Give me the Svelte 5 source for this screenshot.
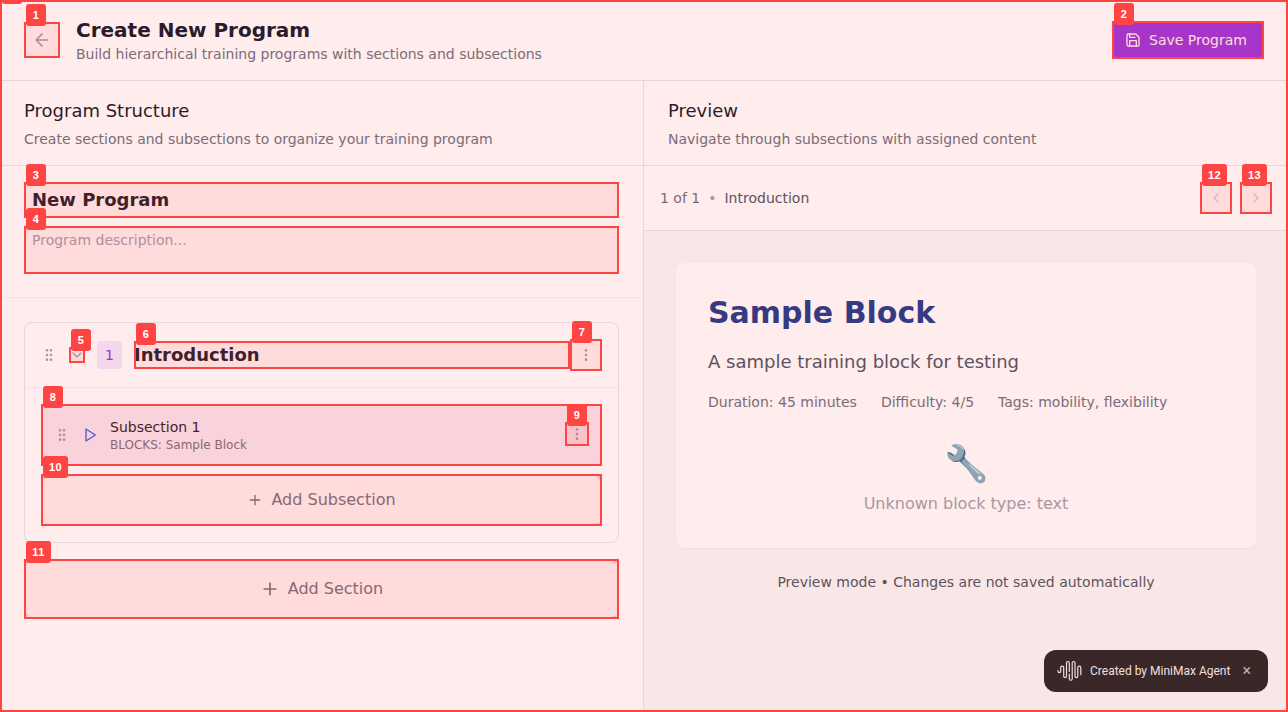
<script>
  let programName = $state('New Program');
  let description = $state('');
  let sectionName = $state('Introduction');
  const dots = [5, 12, 19];
</script>

{#snippet mark(n)}
  <span class="mark"><b class:wide={n > 9}>{n}</b></span>
{/snippet}

{#snippet grip()}
  <svg class="icon gray" viewBox="0 0 24 24">
    {#each dots as y}
      <circle cx="9" cy={y} r="1" /><circle cx="15" cy={y} r="1" />
    {/each}
  </svg>
{/snippet}

{#snippet more()}
  <svg class="icon gray" viewBox="0 0 24 24">
    {#each dots as y}<circle cx="12" cy={y} r="1" />{/each}
  </svg>
{/snippet}

<div class="app">
  <header>
    <button class="back host" aria-label="Back">
      <svg class="icon i20 gray" viewBox="0 0 24 24"><path d="m12 19-7-7 7-7M19 12H5" /></svg>
      {@render mark(1)}
    </button>
    <div class="heading">
      <h1>Create New Program</h1>
      <p>Build hierarchical training programs with sections and subsections</p>
    </div>
    <button class="save host">
      <svg class="icon" viewBox="0 0 24 24">
        <path d="M19 21H5a2 2 0 0 1-2-2V5a2 2 0 0 1 2-2h11l5 5v11a2 2 0 0 1-2 2z" />
        <path d="M17 21v-8H7v8M7 3v5h8" />
      </svg>
      <span>Save Program</span>
      {@render mark(2)}
    </button>
  </header>

  <main>
    <section class="structure">
      <div class="panel-head">
        <h2>Program Structure</h2>
        <p>Create sections and subsections to organize your training program</p>
      </div>
      <div class="details">
        <div class="host name"><input aria-label="Name" bind:value={programName} />{@render mark(3)}</div>
        <div class="host desc">
          <textarea placeholder="Program description..." bind:value={description}></textarea>
          {@render mark(4)}
        </div>
      </div>
      <div class="sections">
        <article>
          <div class="section-head">
            {@render grip()}
            <button class="toggle host" aria-label="Toggle">
              <svg class="icon gray" viewBox="0 0 24 24"><path d="m6 9 6 6 6-6" /></svg>
              {@render mark(5)}
            </button>
            <span class="number">1</span>
            <div class="host title"><input aria-label="Section" bind:value={sectionName} />{@render mark(6)}</div>
            <button class="menu host" aria-label="Section menu">{@render more()}{@render mark(7)}</button>
          </div>
          <div class="section-body">
            <div class="sub host">
              {@render grip()}
              <svg class="icon play" viewBox="0 0 24 24"><path d="m6 3 14 9-14 9z" /></svg>
              <div class="sub-text">
                <strong>Subsection 1</strong>
                <small>BLOCKS: Sample Block</small>
              </div>
              {@render mark(8)}
              <button class="menu small host" aria-label="Subsection menu">{@render more()}{@render mark(9)}</button>
            </div>
            <button class="add host">
              <svg class="icon" viewBox="0 0 24 24"><path d="M5 12h14M12 5v14" /></svg>
              Add Subsection
              {@render mark(10)}
            </button>
          </div>
        </article>
        <button class="add large host">
          <svg class="icon i20" viewBox="0 0 24 24"><path d="M5 12h14M12 5v14" /></svg>
          Add Section
          {@render mark(11)}
        </button>
      </div>
    </section>

    <section class="preview">
      <div class="panel-head">
        <h2>Preview</h2>
        <p>Navigate through subsections with assigned content</p>
      </div>
      <div class="pager">
        <span>1 of 1</span><span class="bullet">•</span><span class="current">Introduction</span>
        <div class="arrows">
          <button class="menu host" aria-label="Previous">
            <svg class="icon gray faded" viewBox="0 0 24 24"><path d="m15 18-6-6 6-6" /></svg>
            {@render mark(12)}
          </button>
          <button class="menu host" aria-label="Next">
            <svg class="icon gray faded" viewBox="0 0 24 24"><path d="m9 18 6-6-6-6" /></svg>
            {@render mark(13)}
          </button>
        </div>
      </div>
      <div class="canvas">
        <div class="card">
          <h3>Sample Block</h3>
          <p class="lead">A sample training block for testing</p>
          <div class="meta">
            <span>Duration: 45 minutes</span><span>Difficulty: 4/5</span><span>Tags: mobility, flexibility</span>
          </div>
          <div class="unknown">
            <div class="emoji">🔧</div>
            <div>Unknown block type: text</div>
          </div>
        </div>
        <p class="note">Preview mode • Changes are not saved automatically</p>
      </div>
    </section>
  </main>

  <div class="credit">
    <svg viewBox="0 0 26 22">
      <path d="M1 10.5v.7a1.3 1.3 0 0 0 2.7 0V7.6a1.5 1.5 0 0 1 3 0v8.6a1.4 1.4 0 0 0 2.8 0V2.9a1.4 1.4 0 0 1 2.8 0v8.6M12.3 14v4.8a1.4 1.4 0 0 0 2.9 0V2.9a1.4 1.4 0 0 1 2.8 0v13.3a1.4 1.4 0 0 0 2.8 0V7.6a1.5 1.5 0 0 1 3 0v7.2" />
    </svg>
    <span>Created by MiniMax Agent</span>
    <i>×</i>
  </div>

  <div class="frame"><b></b></div>
</div>

<style>
  :global(body) { margin: 0; overflow: hidden; }
  .app {
    position: relative; width: 1288px; height: 712px; overflow: hidden;
    display: flex; flex-direction: column; background: #fff; color: #111827;
    font: 14px/20px "DejaVu Sans", sans-serif;
  }
  .app :global(*) { box-sizing: border-box; }
  h1, h2, h3, p { margin: 0; }
  button, input, textarea { font: inherit; color: inherit; border: 0; background: none; padding: 0; margin: 0; outline: 0; }
  .host { position: relative; }
  .icon { width: 16px; height: 16px; flex: none; display: block; fill: none; stroke: currentColor; stroke-width: 2; stroke-linecap: round; stroke-linejoin: round; }
  .i20 { width: 20px; height: 20px; }
  .gray { color: #9ca3af; }
  .faded { opacity: .5; }

  header { display: flex; align-items: center; height: 81px; padding: 0 24px; border-bottom: 1px solid #e5e7eb; flex: none; }
  .back { width: 36px; height: 36px; display: grid; place-items: center; }
  .heading { margin-left: 16px; flex: 1; }
  h1 { font-size: 20px; line-height: 28px; font-weight: 700; }
  p { color: #6b7280; }
  .save { width: 152px; height: 38px; padding-left: 13px; display: flex; align-items: center; gap: 8px; background: #9333ea; color: #fff; border-radius: 4px; }

  main { display: flex; flex: 1; min-height: 0; }
  .structure { width: 644px; border-right: 1px solid #e5e7eb; }
  .preview { flex: 1; display: flex; flex-direction: column; }
  .panel-head { height: 85px; padding: 16px 24px; border-bottom: 1px solid #e5e7eb; }
  h2 { font-size: 18px; line-height: 28px; font-weight: 400; margin-bottom: 4px; }
  .details { height: 132px; padding: 16px 24px; border-bottom: 1px solid #f3f4f6; }
  .name { height: 36px; margin-bottom: 8px; }
  .name input { display: block; width: 100%; height: 36px; padding: 0 8px 2px; font-size: 18px; font-weight: 700; }
  .desc { height: 48px; }
  textarea { display: block; width: 100%; height: 48px; padding: 4px 8px; resize: none; overflow: hidden; }
  textarea::placeholder { color: #9ca3af; opacity: 1; }

  .sections { padding: 24px; display: flex; flex-direction: column; gap: 16px; }
  article { border: 1px solid #e5e7eb; border-radius: 8px; }
  .section-head { display: flex; align-items: center; gap: 12px; height: 65px; padding: 0 16px; border-bottom: 1px solid #f3f4f6; }
  .number { width: 25px; height: 28px; display: grid; place-items: center; border-radius: 4px; background: #f3e8ff; color: #9333ea; }
  .title { flex: 1; height: 28px; margin-right: -12px; }
  .title input { display: block; width: 100%; height: 28px; padding-bottom: 2px; font-size: 18px; font-weight: 700; }
  .menu { width: 32px; height: 32px; display: grid; place-items: center; flex: none; }
  .small { width: 24px; height: 24px; }
  .section-body { padding: 16px; display: flex; flex-direction: column; gap: 8px; }
  .sub { display: flex; align-items: center; gap: 12px; height: 62px; padding: 0 12px; border: 1px solid #e9d5ff; border-radius: 6px; background: #faf5ff; }
  .sub > .mark { inset: -1px; }
  .play { color: #2563eb; }
  .sub-text { flex: 1; display: flex; flex-direction: column; }
  .sub-text strong { font-weight: 400; }
  .sub-text small { font-size: 12px; line-height: 16px; color: #6b7280; }
  .sub .small { top: -1px; }
  .add { display: flex; align-items: center; justify-content: center; gap: 8px; height: 52px; width: 100%; border: 2px dashed #d1d5db; border-radius: 8px; color: #6b7280; font-size: 16px; line-height: 24px; }
  .add > .mark { inset: -2px; }
  .large { height: 60px; }

  .pager { display: flex; align-items: center; gap: 8px; height: 65px; padding: 0 16px; border-bottom: 1px solid #e5e7eb; color: #6b7280; }
  .bullet { color: #9ca3af; }
  .current { color: #4b5563; }
  .arrows { margin-left: auto; display: flex; gap: 8px; }
  .canvas { flex: 1; padding: 32px; background: #f9fafb; }
  .card { height: 285px; padding: 32px; border-radius: 8px; background: #fff; box-shadow: 0 1px 2px #0000000d; }
  h3 { font-size: 30px; line-height: 36px; color: #1e3a8a; margin-bottom: 17px; }
  .lead { font-size: 18px; line-height: 28px; color: #4b5563; margin-bottom: 16px; }
  .meta { display: flex; gap: 24px; color: #6b7280; }
  .unknown { margin-top: 32px; text-align: center; color: #9ca3af; font-size: 16px; line-height: 24px; }
  .emoji { font: 36px/40px "Noto Color Emoji", "DejaVu Sans", sans-serif; margin-bottom: 8px; padding-left: 2px; }
  .note { margin-top: 24px; text-align: center; color: #4b5563; }

  .credit {
    position: absolute; right: 20px; bottom: 20px; width: 224px; height: 42px; border-radius: 12px;
    display: flex; align-items: center; padding-left: 13px; background: #242424; color: #f0f0f0;
    font: 12px/16px Roboto, sans-serif;
  }
  .credit svg { width: 26px; height: 22px; margin-right: 7px; fill: none; stroke: #f0f0f0; stroke-width: 1.2; stroke-linecap: round; }
  .credit span { white-space: nowrap; }
  .credit i { position: absolute; right: 17px; font-style: normal; font-size: 16px; color: #bbb; }

  .frame, .mark { position: absolute; inset: 0; border: 2px solid #f44; background: rgba(255, 68, 68, .1); pointer-events: none; }
  .frame { z-index: 1; }
  .mark { z-index: 2; }
  .frame b, .mark b {
    position: absolute; left: 0; top: -20px; width: 20px; height: 22px; border-radius: 3px;
    background: #f44; color: #fff; font: 700 11px/23px "Liberation Sans", sans-serif; letter-spacing: .4px; text-align: center;
  }
  .mark b.wide { width: 25px; }
</style>
